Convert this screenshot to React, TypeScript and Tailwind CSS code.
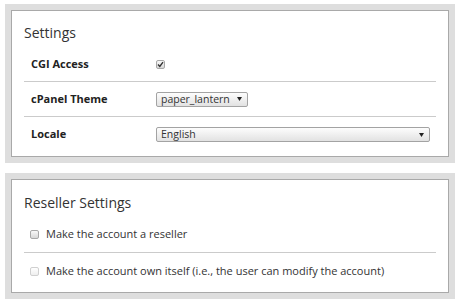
const font = { fontFamily: '"Open Sans", "Liberation Sans", sans-serif' };

function Arrow() {
  return (
    <svg width="5" height="4" viewBox="0 0 5 4" aria-hidden="true">
      <path d="M0 0h5L2.5 4z" fill="#222" />
    </svg>
  );
}

function Select({ value, className }: { value: string; className: string }) {
  return (
    <div
      className={`flex h-[15px] items-center justify-between rounded-[2px] border border-[#a3a3a3] bg-gradient-to-b from-[#fdfdfd] to-[#e2e2e2] pl-[4px] pr-[5px] text-[10.5px] leading-[13px] text-[#333] ${className}`}
    >
      <span>{value}</span>
      <Arrow />
    </div>
  );
}

function Checkbox({ checked = false, disabled = false }: { checked?: boolean; disabled?: boolean }) {
  return (
    <span
      className={`flex h-[9px] w-[9px] shrink-0 items-center justify-center rounded-[2px] border bg-gradient-to-b ${
        disabled ? 'border-[#d0d0d0] from-white to-[#eeeeee]' : 'border-[#a8a8a8] from-[#f8f8f8] to-[#d8d8d8]'
      }`}
    >
      {checked && (
        <svg width="7" height="7" viewBox="0 0 7 7" aria-hidden="true">
          <path d="M1 3.6 2.8 5.4 6 1.2" fill="none" stroke="#333" strokeWidth="1.4" />
        </svg>
      )}
    </span>
  );
}

function Panel({ title, top, children }: { title: string; top: string; children: React.ReactNode }) {
  return (
    <div className="w-[450px] bg-[#dedede] p-[6px]">
      <div className={`border border-[#a9a9a9] bg-white px-[12px] ${top}`}>
        <h2 className="text-[14px] leading-[20px] text-[#333]">{title}</h2>
        {children}
      </div>
    </div>
  );
}

export default function App() {
  return (
    <div className="flex min-h-[305px] flex-col gap-[10px] bg-white pl-[5px] pt-[4px]" style={font}>
      <Panel title="Settings" top="pt-[12px]">
        <div className="pb-[4px] pt-[4px]">
          <div className="flex h-[35px] items-center border-b border-[#cbcbcb] pl-[7px]">
            <span className="w-[125px] text-[11px] font-bold text-[#222]">CGI Access</span>
            <Checkbox checked />
          </div>
          <div className="flex h-[35px] items-center border-b border-[#cbcbcb] pl-[7px]">
            <span className="w-[125px] text-[11px] font-bold text-[#222]">cPanel Theme</span>
            <Select value="paper_lantern" className="w-[92px]" />
          </div>
          <div className="flex h-[35px] items-center pl-[7px] pr-[6px]">
            <span className="w-[125px] text-[11px] font-bold text-[#222]">Locale</span>
            <Select value="English" className="flex-1" />
          </div>
        </div>
      </Panel>
      <Panel title="Reseller Settings" top="pt-[13px]">
        <div className="pb-[2px] pt-[3px]">
          <div className="flex h-[37px] items-center gap-[7px] border-b border-[#cbcbcb] pl-[6px]">
            <Checkbox />
            <span className="text-[11px] text-[#333]">Make the account a reseller</span>
          </div>
          <div className="flex h-[37px] items-center gap-[7px] pl-[6px]">
            <Checkbox disabled />
            <span className="text-[11px] text-[#333]">
              Make the account own itself (i.e., the user can modify the account)
            </span>
          </div>
        </div>
      </Panel>
    </div>
  );
}
